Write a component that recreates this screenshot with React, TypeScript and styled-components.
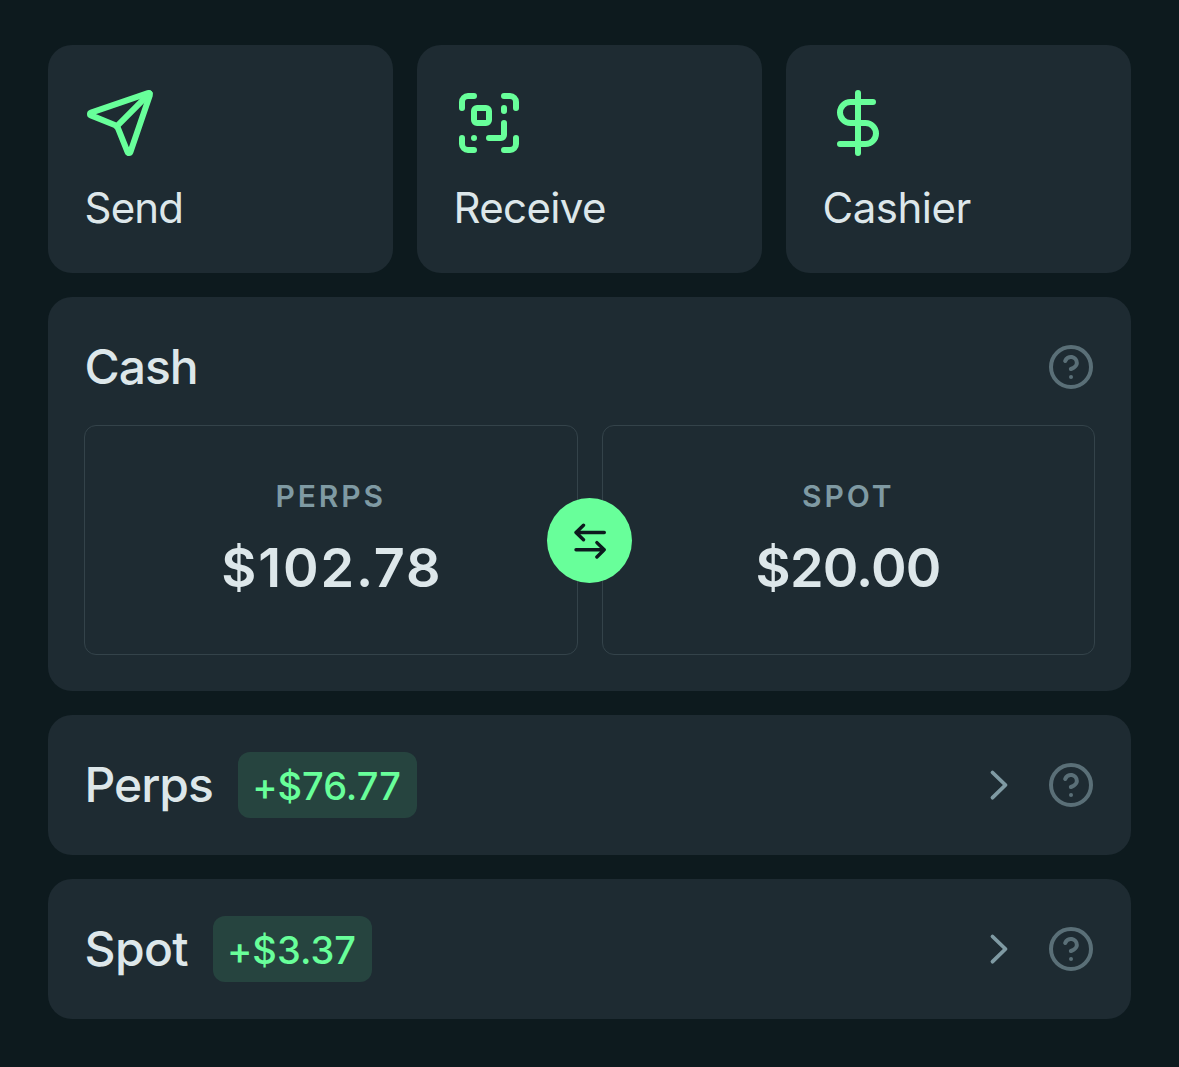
import React from "react";
import styled, { createGlobalStyle } from "styled-components";

const color = {
  page: "#0d1a1e",
  card: "#1e2b32",
  line: "#34434a",
  text: "#dde7ea",
  label: "#7f9aa3",
  muted: "#5a6f77",
  green: "#68ff9a",
  badge: "#26443f",
  ink: "#0d1a1e",
};

const GlobalStyle = createGlobalStyle`
  *, *::before, *::after { box-sizing: border-box; }
  body {
    margin: 0;
    background: ${color.page};
    color: ${color.text};
    font-family: Inter, "Liberation Sans", sans-serif;
    font-feature-settings: "calt" 0;
  }
  button { font: inherit; color: inherit; border: 0; padding: 0; background: none; }
`;

const Page = styled.main`
  display: flex;
  flex-direction: column;
  gap: 24px;
  min-height: 1067px;
  padding: 45px 48px 48px;
`;

const Actions = styled.div`
  display: grid;
  grid-template-columns: repeat(3, 1fr);
  gap: 24px;
`;

const ActionButton = styled.button`
  display: flex;
  flex-direction: column;
  align-items: flex-start;
  gap: 19px;
  height: 228px;
  padding: 42px 36px;
  border-radius: 24px;
  background: ${color.card};
`;

const ActionLabel = styled.span<{ $spacing: number }>`
  padding-left: 0.5px;
  font-size: 42px;
  line-height: 60px;
  letter-spacing: ${(p) => p.$spacing}px;
`;

const Icon = styled.svg<{ $size: number; $color: string; $stroke?: number }>`
  display: block;
  flex: none;
  width: ${(p) => p.$size}px;
  height: ${(p) => p.$size}px;
  fill: none;
  stroke: ${(p) => p.$color};
  stroke-width: ${(p) => p.$stroke ?? 2};
  stroke-linecap: round;
  stroke-linejoin: round;
`;

const CashCard = styled.section`
  display: flex;
  flex-direction: column;
  height: 394px;
  padding: 36px;
  border-radius: 24px;
  background: ${color.card};
`;

const CashHeader = styled.header`
  display: flex;
  align-items: center;
  justify-content: space-between;
  height: 68px;
  margin-bottom: 24px;
`;

const Title = styled.h2<{ $spacing: number }>`
  margin: 0;
  padding-left: 0.5px;
  font-size: 48px;
  font-weight: 500;
  line-height: 68px;
  letter-spacing: ${(p) => p.$spacing}px;
`;

const Balances = styled.div`
  position: relative;
  display: grid;
  grid-template-columns: 1fr 1fr;
  gap: 24px;
  height: 230px;
`;

const Balance = styled.div`
  display: flex;
  flex-direction: column;
  align-items: center;
  padding-top: 49px;
  border: 1px solid ${color.line};
  border-radius: 12px;
`;

const BalanceLabel = styled.span`
  font-size: 30px;
  font-weight: 600;
  line-height: 42px;
  letter-spacing: 2.9px;
  color: ${color.label};
`;

const Amount = styled.span<{ $spacing: number }>`
  margin-top: 17px;
  margin-right: ${(p) => -p.$spacing}px;
  padding-left: 0.5px;
  font-size: 54px;
  font-weight: 600;
  line-height: 68px;
  letter-spacing: ${(p) => p.$spacing}px;
`;

const SwapButton = styled.button`
  position: absolute;
  top: 73px;
  left: calc(50% - 42.5px);
  display: grid;
  place-items: center;
  width: 85px;
  height: 85px;
  border-radius: 50%;
  background: ${color.green};
`;

const Row = styled.section`
  display: flex;
  align-items: center;
  height: 140px;
  padding: 0 36px;
  border-radius: 24px;
  background: ${color.card};
`;

const RowTitle = styled(Title)<{ $width: number }>`
  width: ${(p) => p.$width}px;
  white-space: nowrap;
`;

const Badge = styled.span<{ $width: number }>`
  display: flex;
  align-items: center;
  justify-content: center;
  width: ${(p) => p.$width}px;
  height: 66px;
  padding: 1px 2px 0 0;
  margin-left: 24px;
  border-radius: 12px;
  background: ${color.badge};
  color: ${color.green};
  font-size: 38px;
  font-weight: 500;
  white-space: nowrap;
`;

const RowIcons = styled.div`
  display: flex;
  align-items: center;
  gap: 24px;
  margin-left: auto;
`;

const HelpIcon = () => (
  <Icon viewBox="0 0 24 24" $size={48} $color={color.muted}>
    <circle cx="12" cy="12" r="10" />
    <path d="M9.09 9a3 3 0 0 1 5.83 1c0 2-3 3-3 3M12 17h.01" />
  </Icon>
);

const actions = [
  {
    label: "Send",
    spacing: -0.8,
    paths: [
      "M14.536 21.686a.5.5 0 0 0 .937-.024l6.5-19a.496.496 0 0 0-.635-.635l-19 6.5a.5.5 0 0 0-.024.937l7.93 3.18a2 2 0 0 1 1.112 1.11z",
      "m21.854 2.147-10.94 10.939",
    ],
  },
  {
    label: "Receive",
    spacing: -0.65,
    paths: [
      "M17 12v4a1 1 0 0 1-1 1h-4",
      "M17 3h2a2 2 0 0 1 2 2v2",
      "M17 8V7",
      "M21 17v2a2 2 0 0 1-2 2h-2",
      "M3 7V5a2 2 0 0 1 2-2h2",
      "M7 17h.01",
      "M7 21H5a2 2 0 0 1-2-2v-2",
      "M8 7h3a1 1 0 0 1 1 1v3a1 1 0 0 1-1 1H8a1 1 0 0 1-1-1V8a1 1 0 0 1 1-1Z",
    ],
  },
  {
    label: "Cashier",
    spacing: -0.5,
    paths: ["M12 2v20", "M17 5H9.5a3.5 3.5 0 0 0 0 7h5a3.5 3.5 0 0 1 0 7H6"],
  },
];

const balances = [
  { label: "PERPS", amount: "$102.78", spacing: 1.85 },
  { label: "SPOT", amount: "$20.00", spacing: -0.8 },
];

const positions = [
  { name: "Perps", change: "+$76.77", spacing: -1, titleWidth: 130, width: 179 },
  { name: "Spot", change: "+$3.37", spacing: -0.6, titleWidth: 105, width: 159 },
];

export default function App() {
  return (
    <>
      <GlobalStyle />
      <Page>
        <Actions>
          {actions.map((a) => (
            <ActionButton key={a.label}>
              <Icon viewBox="0 0 24 24" $size={72} $color={color.green}>
                {a.paths.map((d) => (
                  <path key={d} d={d} />
                ))}
              </Icon>
              <ActionLabel $spacing={a.spacing}>{a.label}</ActionLabel>
            </ActionButton>
          ))}
        </Actions>

        <CashCard>
          <CashHeader>
            <Title $spacing={-1}>Cash</Title>
            <HelpIcon />
          </CashHeader>
          <Balances>
            {balances.map((b) => (
              <Balance key={b.label}>
                <BalanceLabel>{b.label}</BalanceLabel>
                <Amount $spacing={b.spacing}>{b.amount}</Amount>
              </Balance>
            ))}
            <SwapButton aria-label="Swap">
              <Icon viewBox="0 0 36 36" $size={36} $color={color.ink} $stroke={3.4}>
                <path d="M32.3 9.5H4M11.5 2.2 4 9.5l7.5 7.3M4 26.8h28.2M24.9 19.6l7.3 7.2-7.3 7.2" />
              </Icon>
            </SwapButton>
          </Balances>
        </CashCard>

        {positions.map((p) => (
          <Row key={p.name}>
            <RowTitle $spacing={p.spacing} $width={p.titleWidth}>
              {p.name}
            </RowTitle>
            <Badge $width={p.width}>{p.change}</Badge>
            <RowIcons>
              <Icon viewBox="0 0 48 48" $size={48} $color={color.label} $stroke={3.8}>
                <path d="M17.5 11.5 30.5 24l-13 12.7" />
              </Icon>
              <HelpIcon />
            </RowIcons>
          </Row>
        ))}
      </Page>
    </>
  );
}
